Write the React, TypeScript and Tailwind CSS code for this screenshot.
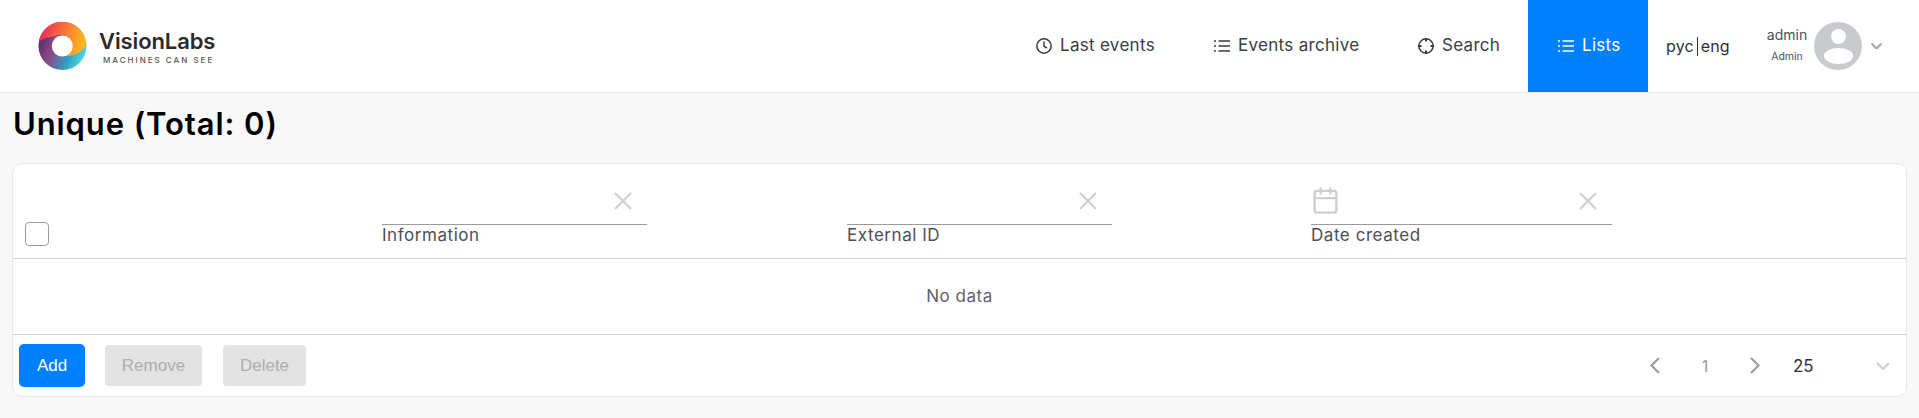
import React from 'react'
import { Calendar } from 'lucide-react'

const montserrat = "font-['Inter',sans-serif]"
const arial = "font-['Liberation_Sans',Arial,sans-serif]"

function Logo() {
  return (
    <svg width="49" height="48" viewBox="0 0 49 48">
      <defs>
        <linearGradient id="ringBottom" x1="0" y1="0.25" x2="1" y2="0.6">
          <stop offset="0" stopColor="#54295e" />
          <stop offset="0.35" stopColor="#8a4a88" />
          <stop offset="0.7" stopColor="#2f9fc0" />
          <stop offset="1" stopColor="#55d8e4" />
        </linearGradient>
        <linearGradient id="ringTop" x1="0" y1="0.2" x2="1" y2="0.4">
          <stop offset="0" stopColor="#ec1f5c" />
          <stop offset="0.5" stopColor="#f9703a" />
          <stop offset="1" stopColor="#ffbb1c" />
        </linearGradient>
      </defs>
      <circle cx="24.5" cy="24" r="24" fill="url(#ringBottom)" />
      <path
        d="M0.7 20 A24 24 0 0 1 48.4 22.5 C44 30 37 34 28.5 34.2 A10.5 10.5 0 0 0 17 14.2 C10 14.8 4.5 16.5 0.7 20 Z"
        fill="url(#ringTop)"
      />
      <circle cx="24.3" cy="24" r="10.5" fill="#fff" />
    </svg>
  )
}

function ClockIcon() {
  return (
    <svg width="16" height="16" viewBox="0 0 16 16" fill="none" stroke="currentColor" strokeWidth="1.5">
      <circle cx="8" cy="8" r="7.2" />
      <path d="M8 3.6V8.4L11 10" />
    </svg>
  )
}

function ListIcon() {
  return (
    <svg width="16" height="16" viewBox="0 0 16 16" fill="none" stroke="currentColor" strokeWidth="1.5">
      <path d="M4.5 3H16M4.5 8H16M4.5 13H16" />
      <path d="M0 3H2M0 8H2M0 13H2" />
    </svg>
  )
}

function TargetIcon() {
  return (
    <svg width="16" height="16" viewBox="0 0 16 16" fill="none" stroke="currentColor" strokeWidth="1.5">
      <circle cx="8" cy="8" r="7.2" />
      <path d="M8 0V3.5M8 12.5V16M0 8H3.5M12.5 8H16" strokeWidth="2" />
    </svg>
  )
}

function CloseIcon() {
  return (
    <svg width="18" height="18" viewBox="0 0 18 18" fill="none" stroke="#cfcfcf" strokeWidth="2.2">
      <path d="M1 1L17 17M17 1L1 17" />
    </svg>
  )
}

function Avatar() {
  return (
    <svg width="48" height="48" viewBox="0 0 48 48">
      <circle cx="24" cy="24" r="24" fill="#c9cacd" />
      <circle cx="24.5" cy="14.5" r="7.5" fill="#fff" />
      <ellipse cx="24.5" cy="34" rx="14.5" ry="8" fill="#fff" />
    </svg>
  )
}

function Arrow({ d, width, height, color }: { d: string; width: number; height: number; color: string }) {
  return (
    <svg width={width} height={height} viewBox={`0 0 ${width} ${height}`} fill="none" stroke={color} strokeWidth="2.2">
      <path d={d} />
    </svg>
  )
}

function NavItem({
  icon,
  label,
  width,
  active,
}: {
  icon: React.ReactNode
  label: string
  width: string
  active?: boolean
}) {
  return (
    <a
      className={`flex h-[92px] items-center gap-2 pl-[30px] text-[17px] tracking-[0.3px] ${width} ${
        active ? 'bg-[#007fff] text-white' : 'text-[#3a3d44]'
      }`}
    >
      {icon}
      <span>{label}</span>
    </a>
  )
}

function Filter({ label, width, calendar }: { label: string; width: string; calendar?: boolean }) {
  return (
    <div className={width}>
      <div className="flex h-[37px] items-start justify-between border-b border-[#9a9a9e] pr-[15px] pl-[2px]">
        {calendar ? (
          <Calendar size={29} strokeWidth={2} className="-mt-[2px] -ml-[2px] text-[#cfcfcf]" />
        ) : (
          <span />
        )}
        <span className="mt-[4px]">
          <CloseIcon />
        </span>
      </div>
      <div className="-mt-[1px] text-[17px] leading-[22px] tracking-[0.55px] text-[#4c4f57]">{label}</div>
    </div>
  )
}

export default function App() {
  return (
    <div className={`min-h-[418px] bg-[#f8f8f8] ${montserrat}`}>
      {/* Header */}
      <header className="flex h-[93px] items-center border-b border-[#e6e6e6] bg-white">
        <div className="ml-[38px] flex items-center gap-[12px]">
          <Logo />
          <div className="pt-[1px]">
            <div className="text-[22px] leading-[26px] font-semibold tracking-[-0.1px] text-[#2b2b2b]">VisionLabs</div>
            <div className="mt-[1px] ml-[4px] text-[8px] leading-[10px] font-medium tracking-[2px] whitespace-nowrap text-[#555]">
              MACHINES CAN SEE
            </div>
          </div>
        </div>

        <nav className="ml-auto flex items-center">
          <NavItem icon={<ClockIcon />} label="Last events" width="w-[178px]" />
          <NavItem icon={<ListIcon />} label="Events archive" width="w-[204px]" />
          <NavItem icon={<TargetIcon />} label="Search" width="w-[140px]" />
          <NavItem icon={<ListIcon />} label="Lists" width="w-[120px]" active />
        </nav>

        <div className="flex w-[271px] items-center">
          <div className="ml-[18px] flex w-[64px] items-center text-[16px] tracking-[0.15px] text-[#2e3138]">
            <span>рус</span>
            <span className="mx-[3px] h-[19px] w-[1px] bg-[#2e3138]" />
            <span>eng</span>
          </div>

          <div className="ml-[30px] flex w-[54px] flex-col items-center pb-[4px]">
            <span className="text-[14px] leading-[20px] text-[#4c4f57]">admin</span>
            <span className="mt-[5px] text-[10.5px] leading-[14px] text-[#4c4f57]">Admin</span>
          </div>
          <Avatar />
          <span className="ml-[9px]">
            <Arrow d="M0.5 0.5L5.5 5.5L10.5 0.5" width={11} height={6} color="#a8a8ac" />
          </span>
        </div>
      </header>

      <h1 className="flex h-[70px] items-center pb-[7px] pl-[13px] text-[31px] font-semibold tracking-[0.9px] text-black">
        Unique (Total: 0)
      </h1>

      {/* Table card */}
      <div className="mr-[12px] ml-[12px] h-[234px] rounded-[10px] border border-[#e8e8e8] bg-white">
        <div className="flex h-[95px] items-end border-b border-[#cfcfcf] pb-[12px]">
          <div className="w-[369px] pl-[12px]">
            <div className="h-[24px] w-[24px] rounded-[4px] border border-[#9a9a9e]" />
          </div>
          <Filter label="Information" width="w-[265px]" />
          <div className="w-[200px]" />
          <Filter label="External ID" width="w-[265px]" />
          <div className="w-[199px]" />
          <Filter label="Date created" width="w-[301px]" calendar />
        </div>

        <div className="flex h-[76px] items-center justify-center border-b border-[#cfcfcf] text-[17px] tracking-[0.5px] text-[#5f6268]">
          No data
        </div>

        <div className="flex h-[61px] items-center pr-[16px] pl-[6px]">
          <button className={`h-[43px] w-[66px] rounded-[5px] bg-[#007fff] text-[17px] text-white ${arial}`}>Add</button>
          <button className={`ml-[20px] h-[41px] w-[97px] rounded-[4px] bg-[#e3e3e3] text-[17px] text-[#aeaeae] ${arial}`}>
            Remove
          </button>
          <button className={`ml-[21px] h-[41px] w-[83px] rounded-[4px] bg-[#e3e3e3] text-[17px] text-[#aeaeae] ${arial}`}>
            Delete
          </button>

          <div className="ml-auto flex items-center">
            <Arrow d="M9 1L1.5 8.5L9 16" width={10} height={17} color="#9a9da3" />
            <span className="w-[90px] text-center text-[16px] text-[#9a9da3]">1</span>
            <Arrow d="M1 1L8.5 8.5L1 16" width={10} height={17} color="#9a9da3" />
            <span className="mt-[2px] ml-[33px] w-[83px] text-[17px] text-[#2e3138]">25</span>
            <Arrow d="M1 1L7 7L13 1" width={14} height={8} color="#cfcfcf" />
          </div>
        </div>
      </div>
    </div>
  )
}
